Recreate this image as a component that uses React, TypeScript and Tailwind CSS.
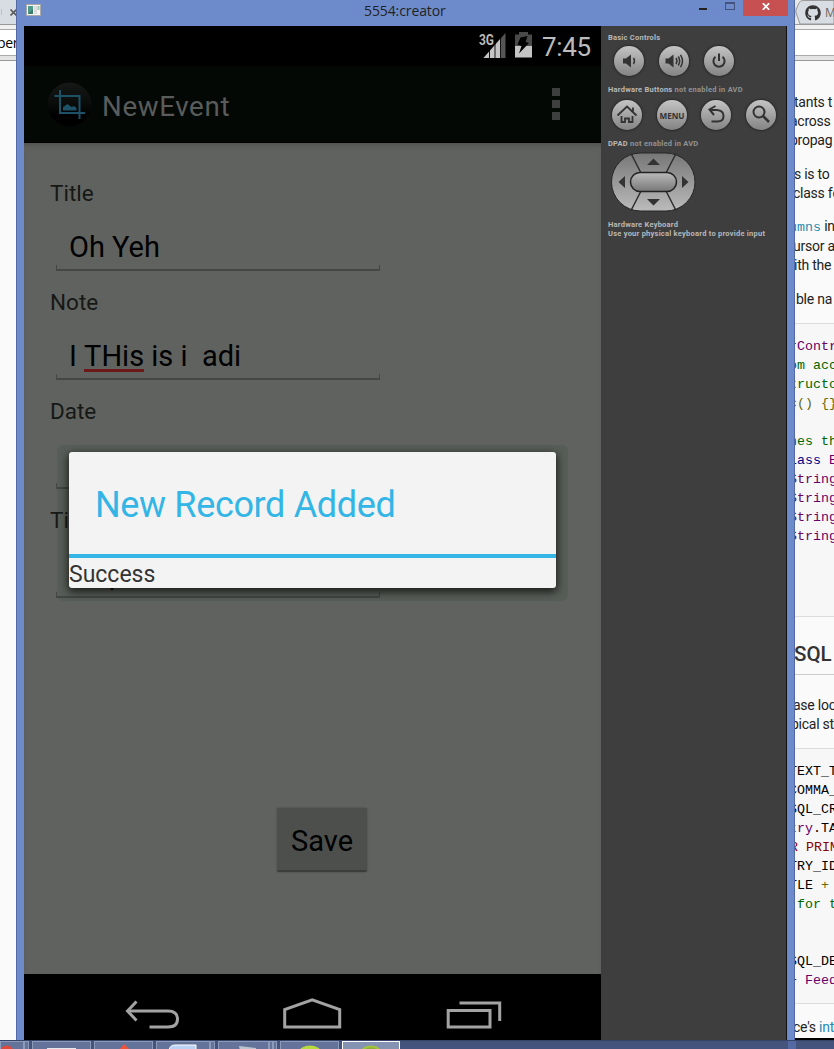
import React from "react";
import { FaGithub } from "react-icons/fa";

const mono = "font-['Liberation_Mono',monospace] text-[13.3px]";
const rob = "font-[Roboto,sans-serif]";
const body = "font-[Roboto,sans-serif] text-[14px] tracking-[-0.25px] text-[#222]";

function Line({ h = "h-[19px]", cls = "", children }: { h?: string; cls?: string; children?: React.ReactNode }) {
  return <div className={`${h} flex shrink-0 items-center whitespace-pre leading-none ${cls}`}>{children}</div>;
}

function LeftStrip() {
  return (
    <div className="flex w-4 shrink-0 flex-col overflow-hidden bg-[#fafafa]">
      <div className="flex h-[25px] shrink-0 items-center justify-end border-b border-[#999] bg-[#d8dde4]">
        <div className="mr-[7px] h-[6px] w-px bg-[#bfc1c4]" />
        <svg className="mr-[-2px] h-[9px] w-[9px] shrink-0" viewBox="0 0 9 9" stroke="#555" strokeWidth="1.7">
          <path d="M1.5 1.5l6 6M7.5 1.5l-6 6" />
        </svg>
      </div>
      <div className="h-[4px] shrink-0 bg-[#f0f0f0]" />
      <div className="flex h-[27px] shrink-0 items-center border-y border-[#aaa] bg-white font-['Open_Sans',sans-serif] text-[14px] tracking-[-0.3px] text-black">
        <span className="-ml-[3px]">per</span>
      </div>
      <div className="h-[5px] shrink-0 border-b border-[#999] bg-[#e4e4e4]" />
    </div>
  );
}

function RightStrip() {
  return (
    <div className="flex w-[39px] shrink-0 flex-col overflow-hidden bg-[#fafafa]">
      <div className="h-[25px] shrink-0 border-b border-[#999] bg-[#e9e9e9]">
        <svg className="h-6 w-[39px]" viewBox="0 0 39 24">
          <path d="M0 6L0 18L2 14V10Z" fill="#d2d2d2" />
          <path d="M39 .5H8Q5 .5 4 3L1 10Q.6 12 1.5 14L5 24H39Z" fill="#d8dde4" stroke="#999" />
          <FaGithub x="10" y="5" size="16" color="#333" />
          <text x="30" y="17" fontFamily="Open Sans" fontSize="12" fill="#666">M</text>
        </svg>
      </div>
      <div className="h-[4px] shrink-0 bg-[#f0f0f0]" />
      <div className="h-[27px] shrink-0 border-y border-[#aaa] bg-white" />
      <div className="h-[5px] shrink-0 border-b border-[#999] bg-[#e4e4e4]" />
      <div className={`flex h-[262px] shrink-0 flex-col pt-[31px] ${body}`}>
        <Line><span className="-ml-px">tants t</span></Line>
        <Line><span className="-ml-[5px]">across</span></Line>
        <Line><span className="-ml-[5px]">propag</span></Line>
        <Line cls="mt-[15px]"><span className="-ml-px">s is to</span></Line>
        <Line><span className="-ml-[2px]">class fo</span></Line>
        <Line cls="mt-[15px]">
          <span><span className={`${mono} -ml-[6px] tracking-normal text-[#258aaf]`}>umns</span> in</span>
        </Line>
        <Line><span className="-ml-[2px]">ursor a</span></Line>
        <Line><span className="-ml-px">ith the</span></Line>
        <Line cls="mt-[15px]"><span className="ml-px">ble na</span></Line>
      </div>
      <div className={`flex h-[294px] shrink-0 flex-col border-y border-[#ddd] bg-[#f7f7f7] pt-[13px] text-[#606] ${mono}`}>
        <Line><span className="-ml-[6px]">rContr</span></Line>
        <Line cls="text-[#060]"><span className="-ml-[6px]">om acc</span></Line>
        <Line cls="text-[#060]"><span className="-ml-[6px]">tructo</span></Line>
        <Line cls="text-[#660]"><span className="-ml-[6px]">c() {"{}"}</span></Line>
        <Line />
        <Line cls="text-[#060]"><span className="-ml-[6px]">nes th</span></Line>
        <Line><span className="-ml-[6px]"><span className="text-[#008]">lass</span> E</span></Line>
        <Line><span className="-ml-[6px]">String</span></Line>
        <Line><span className="-ml-[6px]">String</span></Line>
        <Line><span className="-ml-[6px]">String</span></Line>
        <Line><span className="-ml-[6px]">String</span></Line>
      </div>
      <div className={`flex h-[58px] shrink-0 items-center border-b border-[#ccc] pt-[17px] text-[20.5px] font-medium text-[#333] ${rob}`}>
        <span className="-ml-px">SQL</span>
      </div>
      <div className={`h-[73px] shrink-0 pt-[20px] ${body}`}>
        <Line><span className="-ml-[2px]">ase loc</span></Line>
        <Line><span className="-ml-[4px]">pical st</span></Line>
      </div>
      <div className={`h-[256px] shrink-0 border-y border-[#ddd] bg-[#f7f7f7] pt-[13px] text-black ${mono}`}>
        <Line><span className="-ml-[6px]">TEXT_T</span></Line>
        <Line><span className="-ml-[6px]">COMMA_</span></Line>
        <Line><span className="-ml-[6px]">SQL_CR</span></Line>
        <Line><span className="-ml-[6px]"><span className="text-[#606]">try</span>.TA</span></Line>
        <Line cls="text-[#800]"><span className="-ml-[5px]">R PRIM</span></Line>
        <Line><span className="-ml-[6px]">TRY_ID</span></Line>
        <Line><span className="-ml-[6px]">TLE <span className="text-[#660]">+</span></span></Line>
        <Line cls="text-[#060]"><span className="ml-[2px]">for t</span></Line>
        <Line />
        <Line />
        <Line><span className="-ml-[6px]">SQL_DE</span></Line>
        <Line cls="text-[#606]"><span className="-ml-[6px]">+ Feed</span></Line>
      </div>
      <div className={`flex h-[36px] shrink-0 items-center whitespace-pre border-b-2 border-black pt-[12px] ${body}`}>
        <span className="-ml-[2px]">ce's <span className="text-[#258aaf]">int</span></span>
      </div>
    </div>
  );
}

function TitleBar() {
  return (
    <div className="flex h-[26px] shrink-0 items-start bg-[#6d8bcb]">
      <svg className="ml-[9px] mt-1 h-3 w-[15px] shrink-0" viewBox="0 0 15 12">
        <rect x=".5" y=".5" width="14" height="11" fill="#f4f4f4" stroke="#aaa" />
        <rect x="2" y="2" width="5" height="8" fill="#4f9a8d" />
        <path d="M2 10L7 5V10Z" fill="#3b7d68" />
        <rect x="8" y="2" width="3" height="8" fill="#ddd" />
        <rect x="11.5" y="2" width="2" height="4" fill="#9cc8b8" />
      </svg>
      <div className="flex h-[21px] flex-1 items-center pl-[323px] font-['Open_Sans',sans-serif] text-[14px] tracking-[-0.1px] text-[#222]">
        5554:creator
      </div>
      <div className="mt-[8px] h-[2px] w-[8px] bg-[#222]" />
      <div className="ml-[18px] mt-[2px] h-[8px] w-[10px] border border-t-2 border-[#43537b]" />
      <div className="ml-[8px] mr-[6px] flex h-4 w-[45px] items-center justify-center bg-[#c75050]">
        <svg className="mb-[3px] h-[7px] w-[8px]" viewBox="0 0 8 7" stroke="#fff" strokeWidth="1.8">
          <path d="M.8 .2L7.2 6.8M7.2 .2L.8 6.8" />
        </svg>
      </div>
    </div>
  );
}

function StatusBar() {
  return (
    <div className="flex h-10 shrink-0 bg-black">
      <svg className="ml-[454px] h-10 w-[60px] shrink-0" viewBox="478 26 60 40">
        <text x="479" y="44.500" fontFamily="Roboto" fontWeight="700" fontSize="14" textLength="15" lengthAdjust="spacingAndGlyphs" fill="#bbb">3G</text>
        <path d="M483.500 58L505.500 33V58Z" fill="#555" />
        <path d="M483.500 58L501 38V58Z" fill="#c4c4c4" />
        <path d="M489.500 48V58M495 42V58M500.500 36V58" stroke="#000" strokeWidth=".9" />
        <path d="M515 34.500H519V32H528V34.500H532V46H515Z" fill="#4a4a4a" />
        <path d="M515 46H532V57.500H515Z" fill="#c4c4c4" />
        <path d="M520.500 37.500L527.500 36L525.500 42L529 43L519 53.500L521.500 46L517.500 44.500Z" fill="#000" />
      </svg>
      <div className={`ml-[4px] flex h-10 items-center pt-[3px] text-[26px] tracking-[-0.35px] text-[#bcbcbc] ${rob}`}>7:45</div>
    </div>
  );
}

function ActionBar() {
  return (
    <div className="flex h-[77px] shrink-0 items-center border-b border-black bg-[#030805]">
      <svg className="ml-[22px] h-[50px] w-[46px] shrink-0" viewBox="46 80 46 50">
        <defs>
          <linearGradient id="ball" x1="0" y1="0" x2="0" y2="1">
            <stop offset="0" stopColor="#141816" />
            <stop offset=".45" stopColor="#0a0d0b" />
            <stop offset=".75" stopColor="#000" />
          </linearGradient>
        </defs>
        <circle cx="69.500" cy="105.500" r="22" fill="url(#ball)" />
        <path d="M54.500 97H79.500V120M60 91V114H85" fill="none" stroke="#1c5166" strokeWidth="2" />
        <path d="M63 111.500V108L67.500 105L71.500 108L74 107L76.500 109V111.500Z" fill="#1c5166" />
      </svg>
      <div className={`ml-[10px] flex-1 pt-[5px] text-[27.700px] tracking-[0.65px] text-[#5a5c5b] ${rob}`}>NewEvent</div>
      <div className="mr-[41.5px] flex flex-col gap-[4px]">
        <div className="h-2 w-2 bg-[#3d3f3e]" />
        <div className="h-2 w-2 bg-[#3d3f3e]" />
        <div className="h-2 w-2 bg-[#3d3f3e]" />
      </div>
    </div>
  );
}

function Field({ label, children }: { label: string; children?: React.ReactNode }) {
  return (
    <div className="mb-[17px] w-[356px]">
      <div className="ml-[26px] h-7 text-[22.500px] leading-[28px] text-[#161816]">{label}</div>
      <div className="mt-[22px] h-9 whitespace-pre pl-[45px] text-[29px] leading-9 text-black">{children}</div>
      <div className="ml-8 h-[6px] border-x border-b-2 border-[#454745]" />
    </div>
  );
}

function Dialog() {
  return (
    <div className="absolute left-[33px] top-[302px] flex h-[156px] w-[511px] items-start justify-center rounded-[6px] bg-[#24402c24] pt-[7px]">
      <div className="flex h-[136px] w-[487px] flex-col rounded-[3px] bg-[#f3f3f3] shadow-[0_3px_9px_1px_rgba(0,0,0,0.7)]">
        <div className="h-[102px] pl-[26px] text-[36px] leading-[106px] tracking-[-0.35px] text-[#33b5e5]">New Record Added</div>
        <div className="h-[4px] bg-[#33b5e5]" />
        <div className="h-[30px] text-[23px] leading-[33px] text-[#333]">Success</div>
      </div>
    </div>
  );
}

function NavBar() {
  return (
    <div className="flex h-[66px] shrink-0 items-start bg-black">
      <svg className="h-[66px] w-[577px]" viewBox="24 974 577 66" fill="none" stroke="#a3a3a3" strokeWidth="3">
        <path d="M128 1011H168Q177.500 1011 177.500 1019Q177.500 1027 168 1027H149.500" />
        <path d="M136.500 1001.500L127.500 1011L136.500 1020.500" />
        <path d="M284.700 1027V1009.500L312.200 999.800L339.700 1009.500V1027Z" />
        <path d="M448.200 1010.500H490V1027H448.200Z" />
        <path d="M459.500 1003H499.700V1021" />
      </svg>
    </div>
  );
}

function PhoneScreen() {
  return (
    <div className={`flex w-[577px] shrink-0 flex-col ${rob}`}>
      <StatusBar />
      <ActionBar />
      <div className="relative flex h-[831px] shrink-0 flex-col bg-[#60625f] pt-9 shadow-[inset_0_5px_5px_-3px_#504f50]">
        <Field label="Title">Oh Yeh</Field>
        <Field label="Note">
          I <span className="inline-block h-[34px] border-b-[3px] border-[#6b1918] align-top">THis</span> is i  adi
        </Field>
        <Field label="Date" />
        <Field label="Time">12 pm</Field>
        <button className="ml-[253px] mt-[193px] h-16 w-[90px] rounded-[2px] border-b-2 border-[#3c3e3c] bg-[#4d4f4d] text-[29px] shadow-[0_0_2px_#3e403e]">
          <span className="block pt-[5px] text-black">Save</span>
        </button>
        <Dialog />
      </div>
      <NavBar />
    </div>
  );
}

function RoundButton({ children }: { children: React.ReactNode }) {
  return (
    <div className="flex h-[30px] w-[30px] items-center justify-center rounded-full bg-linear-to-b from-[#c4c4c4] to-[#848484] shadow-[0_0_2px_1px_#2a2a2a]">
      <svg className="h-[30px] w-[30px]" viewBox="0 0 30 30" fill="none" stroke="#333" strokeWidth="2">
        {children}
      </svg>
    </div>
  );
}

function Controls() {
  return (
    <div className="flex flex-1 flex-col border-r border-[#111] bg-[#3e3e3e] pl-[7px] font-[Roboto,sans-serif] text-[7.500px] font-bold leading-[9px] tracking-[0.24px] text-[#b8b8b8]">
      <div className="mt-[7px]">Basic Controls</div>
      <div className="ml-[6px] mt-[4px] flex gap-[14.8px]">
        <RoundButton>
          <path d="M9 12.500H12L17 8.500V21.500L12 17.500H9Z" fill="#333" stroke="none" />
          <path d="M19.500 12Q21.500 15 19.500 18" strokeWidth="1.500" />
        </RoundButton>
        <RoundButton>
          <path d="M6.500 12.500H9.500L14.500 8.500V21.500L9.500 17.500H6.500Z" fill="#333" stroke="none" />
          <path d="M17 12Q19 15 17 18M19.300 10.500Q22 15 19.300 19.500M21.500 8.800Q25.500 15 21.500 21.200" strokeWidth="1.500" />
        </RoundButton>
        <RoundButton>
          <path d="M11.500 10.800A5.600 5.600 0 1 0 18.500 10.800M15 7.500V15" />
        </RoundButton>
      </div>
      <div className="mt-[9px]">Hardware Buttons <span className="text-[#929292]">not enabled in AVD</span></div>
      <div className="ml-[4px] mt-[6px] flex gap-[14.700px]">
        <RoundButton>
          <path d="M5.500 15.500L15 6.500L24.500 15.500M21 12V7.500M9.500 16V22H13V18.500H17V22H20.500V16" strokeWidth="1.800" />
        </RoundButton>
        <RoundButton>
          <text x="15" y="18.500" textAnchor="middle" fontFamily="Open Sans" fontWeight="700" fontSize="9" letterSpacing="0" textLength="25" lengthAdjust="spacingAndGlyphs" fill="#333" stroke="none">MENU</text>
        </RoundButton>
        <RoundButton>
          <path d="M14.500 6L8.500 9.500L13 15M9 10H16Q22.500 10.500 22.500 16Q22.500 21.500 16.500 21.500H10.500" />
        </RoundButton>
        <RoundButton>
          <circle cx="13" cy="12" r="5.500" />
          <path d="M17 16L23 22" strokeWidth="2.500" />
        </RoundButton>
      </div>
      <div className="mt-[9px]">DPAD <span className="text-[#929292]">not enabled in AVD</span></div>
      <svg className="ml-[2px] mt-[3px] h-[62px] w-[88px]" viewBox="610 151 88 62">
        <defs>
          <linearGradient id="pad" x1="0" y1="0" x2="0" y2="1">
            <stop offset="0" stopColor="#777" />
            <stop offset="1" stopColor="#bbb" />
          </linearGradient>
          <linearGradient id="knob" x1="0" y1="0" x2="0" y2="1">
            <stop offset="0" stopColor="#bbb" />
            <stop offset="1" stopColor="#777" />
          </linearGradient>
        </defs>
        <rect x="611.500" y="153" width="83.500" height="58" rx="29" fill="url(#pad)" stroke="#262626" />
        <path d="M631 153.500L641 173M676 153.500L666 173M631 210.500L641 191M676 210.500L666 191" stroke="#2d2d2d" strokeWidth="1.500" />
        <rect x="630.500" y="172.500" width="46" height="19" rx="9.500" fill="url(#knob)" stroke="#222" strokeWidth="1.500" />
        <path d="M647 165L653.500 158.500L660 165ZM647 199L653.500 205.500L660 199ZM625 176L618.500 182L625 188ZM682 176L688.500 182L682 188Z" fill="#333" />
      </svg>
      <div className="mt-[7px] whitespace-nowrap">Hardware Keyboard</div>
      <div className="whitespace-nowrap">Use your physical keyboard to provide input</div>
    </div>
  );
}

function TaskButton({ cls, children }: { cls: string; children?: React.ReactNode }) {
  return (
    <div className={`h-2 shrink-0 overflow-hidden border border-b-0 ${cls}`}>
      <svg className="mx-auto h-2 w-10" viewBox="0 0 40 8">{children}</svg>
    </div>
  );
}

const idle = "border-[#8d9bbb] bg-[#64739a]";

function TaskBar() {
  return (
    <div className="flex h-[9px] items-end overflow-hidden border-t border-[#354368] bg-[#44547c]">
      <TaskButton cls={`${idle} w-[24px]`}><path d="M-2 8Q3 2 9 4L13 8Z" fill="#e04a3c" /></TaskButton>
      <TaskButton cls={`${idle} w-[5px]`} />
      <TaskButton cls={`${idle} ml-[3px] w-[59px]`}><path d="M5 6H34V8H5Z" fill="#e4e8ef" /></TaskButton>
      <TaskButton cls={`${idle} ml-[3px] w-[59px]`}><path d="M15 8L20 2L26 8Z" fill="#ef5536" /></TaskButton>
      <TaskButton cls={`${idle} ml-[3px] w-[54px]`}><path d="M6 8Q7 3 12 3H33V8Z" fill="#bcd2f5" stroke="#fff" /></TaskButton>
      <TaskButton cls={`${idle} w-[5px]`} />
      <TaskButton cls={`${idle} ml-[3px] w-[51px]`}><path d="M15 4L32 6V8H16Z" fill="#bcc5cf" /></TaskButton>
      <TaskButton cls={`${idle} w-[4px]`} />
      <TaskButton cls={`${idle} w-[4px]`} />
      <TaskButton cls={`${idle} ml-[3px] w-[59px]`}><ellipse cx="20" cy="10" rx="11" ry="6.500" fill="#b7dc3c" /></TaskButton>
      <TaskButton cls="ml-[3px] w-[58px] border-white bg-[#8593b2]"><ellipse cx="20" cy="10" rx="9" ry="5.500" fill="#8fae3c" stroke="#a4c639" strokeWidth="2" /></TaskButton>
      <div className="ml-[388px] h-2 w-[8px] bg-[#5469a3]" />
    </div>
  );
}

export default function App() {
  return (
    <div className="flex h-[1049px] w-[834px] flex-col overflow-hidden">
      <div className="flex h-[1040px] shrink-0">
        <LeftStrip />
        <div className="flex w-[779px] shrink-0 flex-col border-x border-[#5269a5] bg-[#6d8bcb]">
          <TitleBar />
          <div className="flex h-[1014px] pl-[7px] pr-[7px]">
            <PhoneScreen />
            <Controls />
          </div>
        </div>
        <RightStrip />
      </div>
      <TaskBar />
    </div>
  );
}
